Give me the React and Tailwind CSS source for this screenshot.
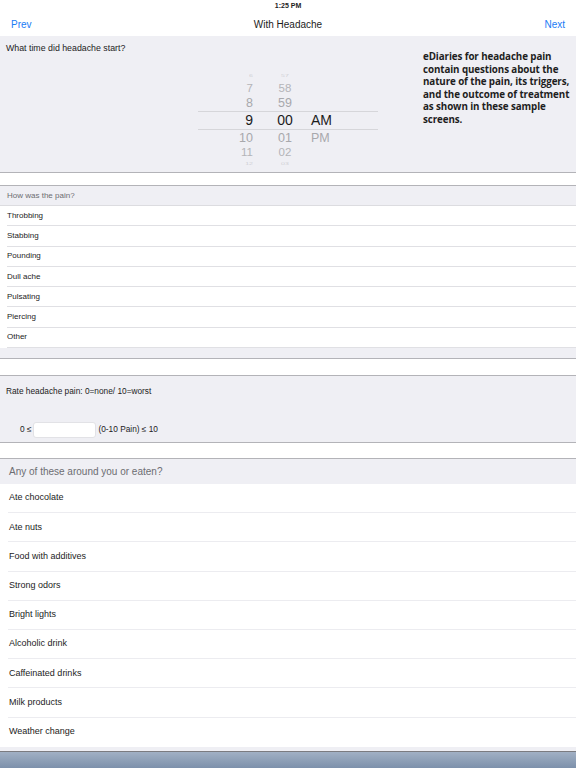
import React from 'react';

const painTypes = ['Throbbing', 'Stabbing', 'Pounding', 'Dull ache', 'Pulsating', 'Piercing', 'Other'];
const triggers = [
  'Ate chocolate',
  'Ate nuts',
  'Food with additives',
  'Strong odors',
  'Bright lights',
  'Alcoholic drink',
  'Caffeinated drinks',
  'Milk products',
  'Weather change',
];

// picker rows, the middle one is the selected value
const pickerRows = [
  { h: '6', m: '57', p: '', cls: 'h-[9px] text-[7px] text-[#d0d0d4] scale-y-50' },
  { h: '7', m: '58', p: '', cls: 'h-[15px] text-[11.5px] text-[#b4b4b8]' },
  { h: '8', m: '59', p: '', cls: 'h-[15px] text-[12.5px] text-[#a8a8ac]' },
  { h: '9', m: '00', p: 'AM', cls: 'h-[19px] text-[14px] text-[#1c1c1c] border-y border-[#d6d6da]' },
  { h: '10', m: '01', p: 'PM', cls: 'h-[16px] text-[12.5px] text-[#a8a8ac]' },
  { h: '11', m: '02', p: '', cls: 'h-[14px] text-[11.5px] text-[#b4b4b8]' },
  { h: '12', m: '03', p: '', cls: 'h-[8px] text-[7px] text-[#d0d0d4] scale-y-50' },
];

export default function App() {
  return (
    <div className="w-[576px] h-[768px] overflow-hidden bg-[#efeff4] font-['Liberation_Sans',Arial,sans-serif] text-[#1c1c1c]">
      {/* status bar */}
      <div className="h-[12px] bg-white flex items-center justify-center text-[7px] font-semibold text-[#222]">1:25 PM</div>

      {/* nav bar */}
      <div className="h-[24px] bg-white flex items-center justify-between px-[11px] text-[10px] relative">
        <span className="text-[#1a7cf5]">Prev</span>
        <span className="absolute left-0 right-0 text-center pointer-events-none">With Headache</span>
        <span className="text-[#1a7cf5]">Next</span>
      </div>

      {/* time question */}
      <div className="h-[137px] flex border-b border-[#b3b3b8]">
        <div className="w-[423px]">
          <div className="pt-[7px] px-[6px] text-[8.8px] leading-[11px]">What time did headache start?</div>
          <div className="ml-[198px] w-[180px] mt-[18px]">
            {pickerRows.map((r, i) => (
              <div key={i} className={`flex items-center ${r.cls}`}>
                <span className="w-[55px] text-right">{r.h}</span>
                <span className="ml-[12px] w-[40px] text-center">{r.m}</span>
                <span className="ml-[6px]">{r.p}</span>
              </div>
            ))}
          </div>
        </div>
        <div className="w-[150px] pt-[15px] font-['Open_Sans',sans-serif] font-bold text-[9.8px] leading-[12.5px] text-[#1e1e1e] tracking-[-0.1px]">
          eDiaries for headache pain<br />
          contain questions about the<br />
          nature of the pain, its triggers,<br />
          and the outcome of treatment<br />
          as shown in these sample<br />
          screens.
        </div>
      </div>

      <div className="h-[13px] bg-white border-b border-[#b3b3b8]" />

      {/* how was the pain */}
      <div className="h-[20px] flex items-center px-[7px] text-[8px] text-[#6d6d72] border-b border-[#dcdce0]">How was the pain?</div>
      <div className="bg-white">
        {painTypes.map((p) => (
          <div key={p} className="h-[20.3px] flex items-center pl-[7px] text-[8px]">
            <div className="flex-1 h-full flex items-center border-b border-[#e0e0e4]">{p}</div>
          </div>
        ))}
      </div>

      <div className="h-[11px] border-b border-[#b3b3b8]" />
      <div className="h-[17px] bg-white border-b border-[#b3b3b8]" />

      {/* rate pain */}
      <div className="h-[67px] border-b border-[#b3b3b8] px-[6px] text-[8.3px]">
        <div className="pt-[9px]">Rate headache pain: 0=none/ 10=worst</div>
        <div className="mt-[24px] flex items-center pl-[14px]">
          <span>0 ≤</span>
          <div className="w-[63px] h-[16px] bg-white rounded-[3px] border border-[#e2e2e6] ml-[2px]" />
          <span className="ml-[2px]">(0-10 Pain) ≤ 10</span>
        </div>
      </div>
      <div className="h-[16px] bg-white border-b border-[#b3b3b8]" />

      {/* triggers */}
      <div className="h-[25px] flex items-center px-[9px] text-[10px] text-[#6d6d72]">Any of these around you or eaten?</div>
      <div className="bg-white">
        {triggers.map((t, i) => (
          <div key={t} className="h-[29.2px] flex items-center pl-[8px] text-[9px]">
            <div className={`flex-1 h-full flex items-center pl-[1px] ${i < triggers.length - 1 ? 'border-b border-[#ececf0]' : ''}`}>{t}</div>
          </div>
        ))}
      </div>
      <div className="h-[5px] border-b border-[#7b7b80]" />
      <div className="h-[20px] bg-gradient-to-b from-[#a1b0c4] to-[#7489a5]" />
    </div>
  );
}
